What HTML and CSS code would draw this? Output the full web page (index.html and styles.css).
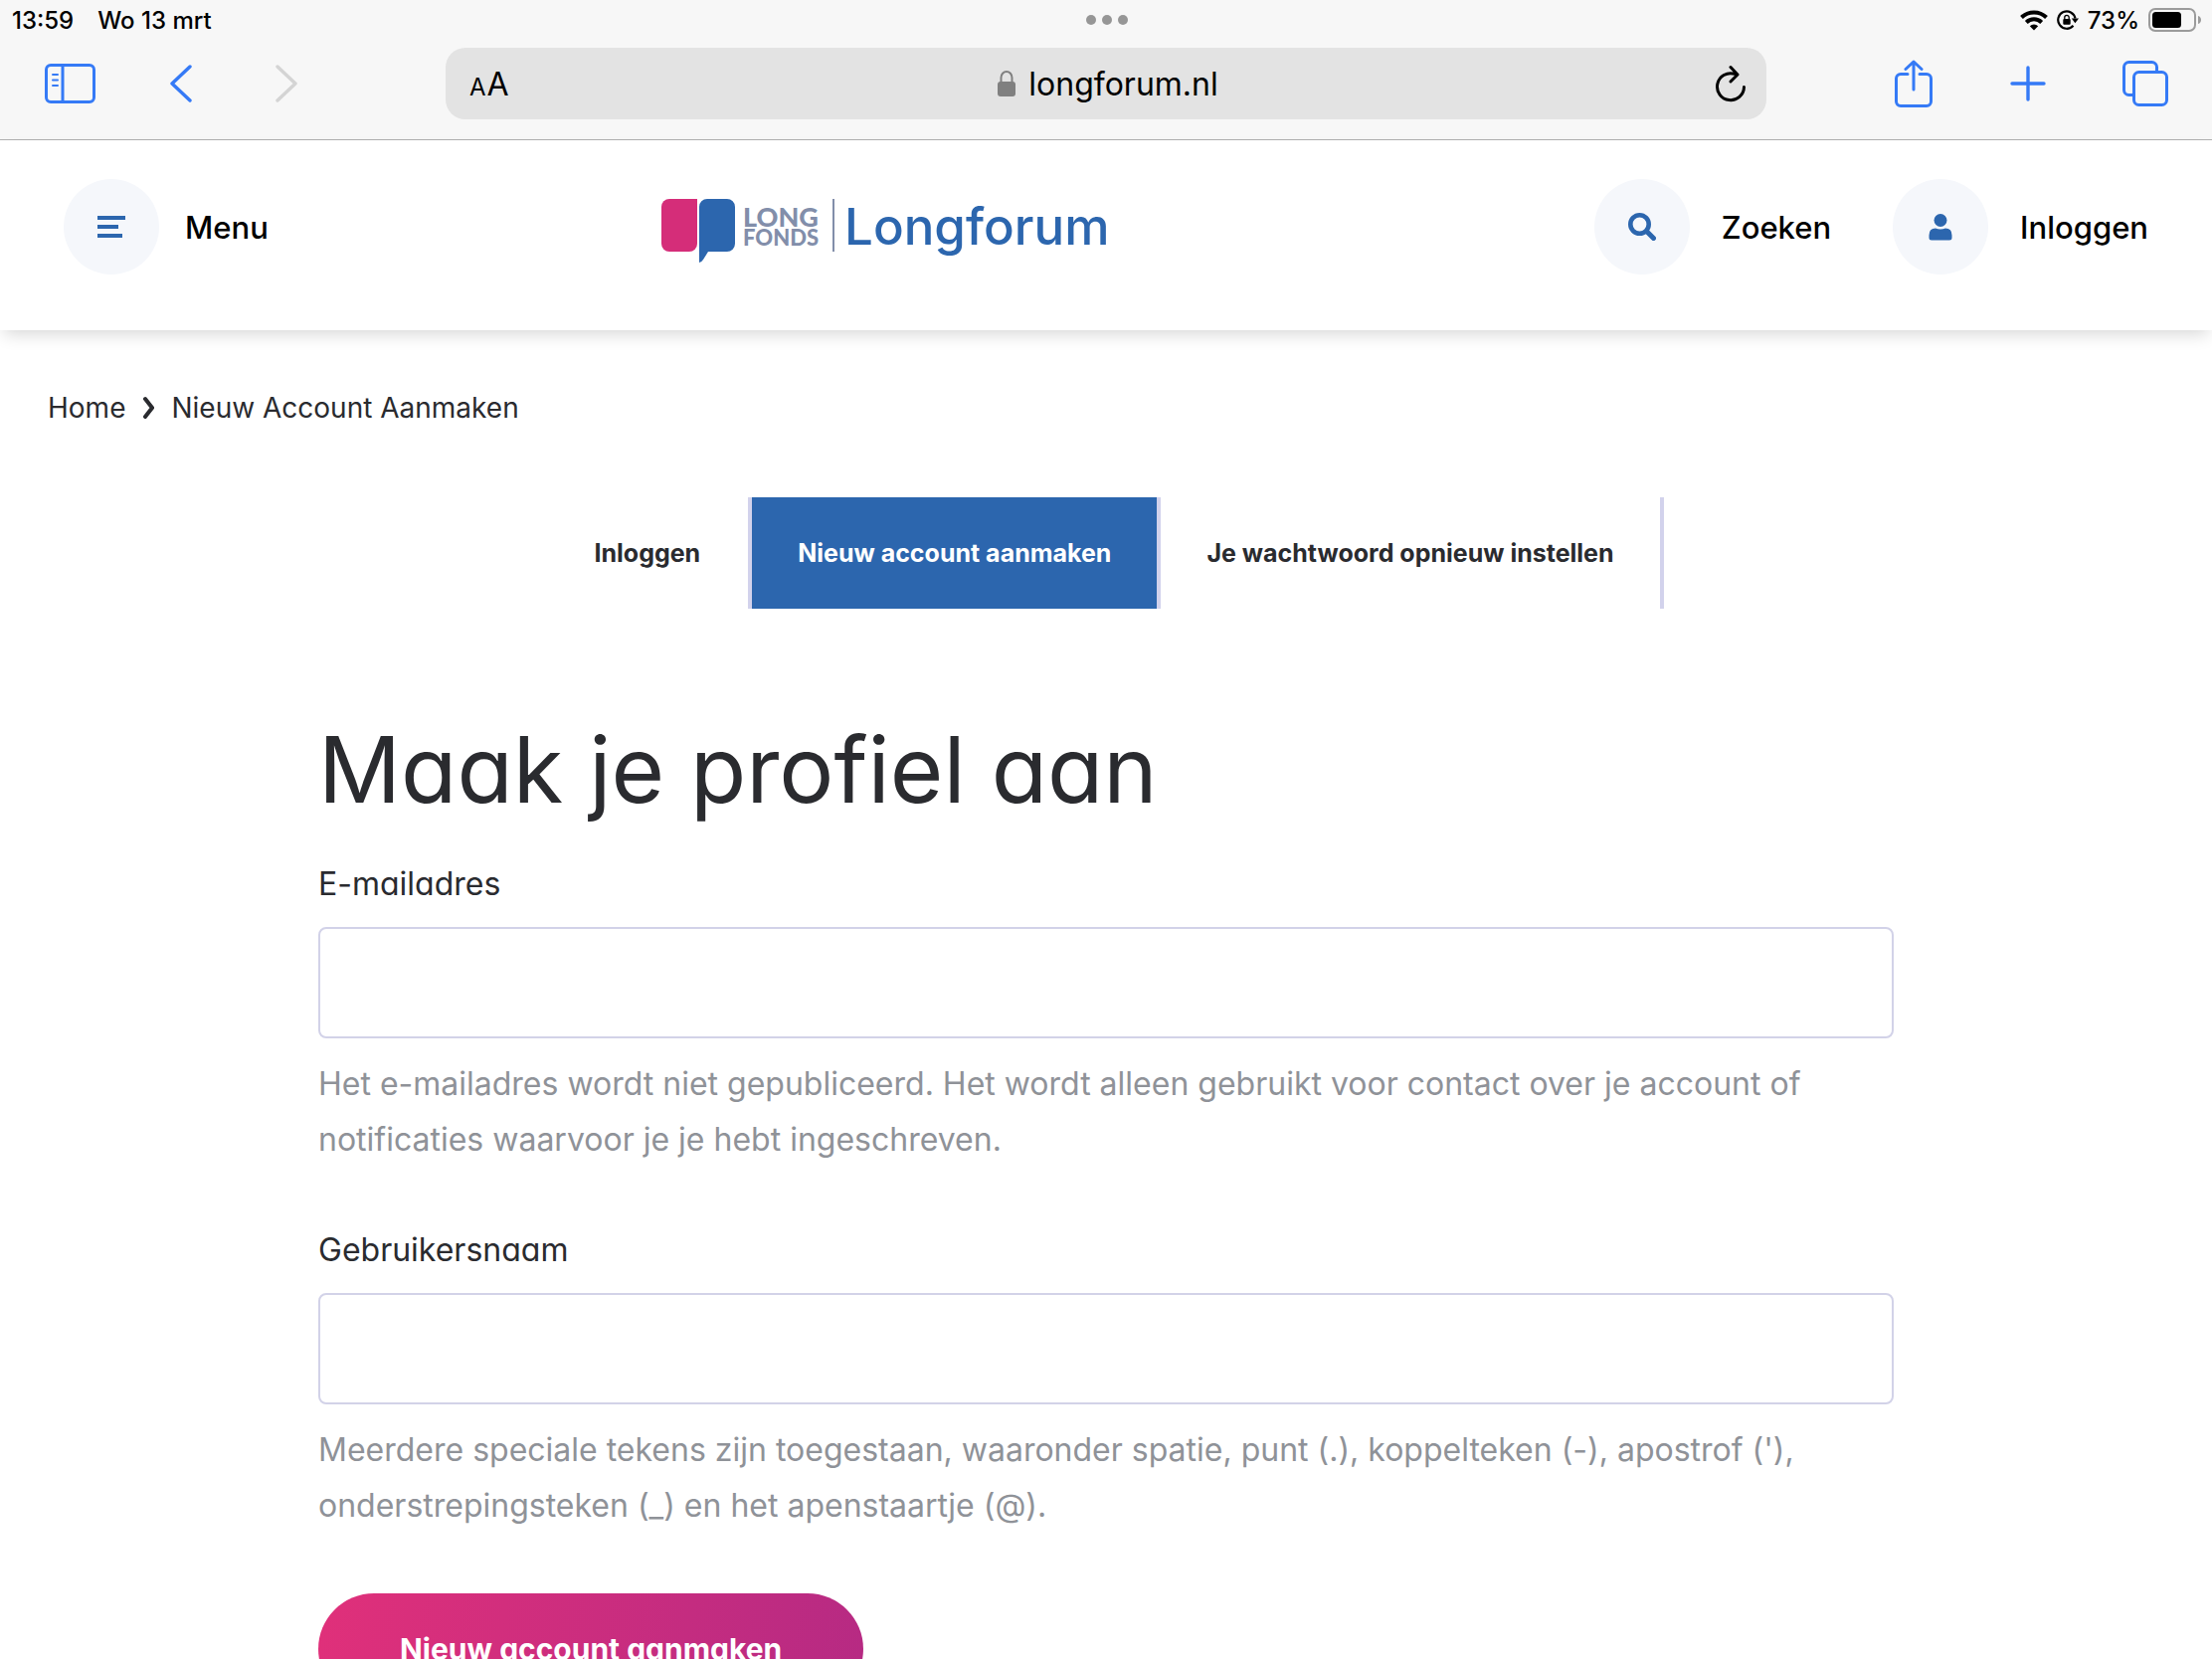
FILE: index.html
```html
<!DOCTYPE html>
<html lang="nl">
<head>
<meta charset="utf-8">
<meta name="viewport" content="width=device-width, initial-scale=1">
<title>Nieuw account aanmaken | Longforum</title>
<link rel="stylesheet" href="styles.css">
</head>
<body>
<div class="browser">
  <div class="status">
    <div class="status-left"><span>13:59</span><span>Wo 13 mrt</span></div>
    <svg class="dots" viewBox="0 0 42 10" width="42" height="10" aria-hidden="true"><circle cx="5" cy="5" r="5"/><circle cx="21" cy="5" r="5"/><circle cx="37" cy="5" r="5"/></svg>
    <div class="status-right">
      <svg viewBox="0 0 28 21" width="28" height="21" aria-hidden="true"><g fill="none" stroke="#000" stroke-width="4"><path d="M1.500 7.500a18 18 0 0 1 25 0"/><path d="M6.300 12.500a11 11 0 0 1 15.400 0"/></g><path d="M14 20.500l-4.200-4.300a6 6 0 0 1 8.400 0z"/></svg>
      <svg viewBox="0 0 22 20" width="22" height="20" aria-hidden="true"><path d="M18.500 8.500A8.700 8.700 0 1 0 16.500 15.800" fill="none" stroke="#000" stroke-width="2.200"/><path d="M14.800 8.500H22L18.400 13.200z"/><rect x="6.300" y="9" width="7.400" height="5.800" rx="1"/><path d="M7.800 9.500V7.500a2.200 2.200 0 0 1 4.400 0v2" fill="none" stroke="#000" stroke-width="1.300"/></svg>
      <span class="percent">73%</span>
      <svg viewBox="0 0 54 24" width="54" height="24" aria-hidden="true"><rect x="1" y="1" width="46" height="22" rx="6" fill="none" stroke="#9b9b9b" stroke-width="2"/><rect x="4" y="4" width="29" height="16" rx="3.500"/><path d="M50 8c4 1 4 7 0 8z" fill="#9b9b9b"/></svg>
    </div>
  </div>
  <div class="toolbar">
    <div class="tools-left">
      <button class="tool" aria-label="Zijbalk"><svg viewBox="0 0 52 40" width="52" height="40"><g fill="none" stroke="currentColor" stroke-width="3" stroke-linecap="round"><rect x="1.500" y="1.500" width="48" height="37" rx="4.500"/><path d="M18 2v36"/><path stroke-width="2" d="M8 11h5M8 16.500h5M8 22h5"/></g></svg></button>
      <button class="tool back" aria-label="Vorige"><svg viewBox="0 0 22 38" width="22" height="38"><path d="M20 2L2 19l18 17" fill="none" stroke="currentColor" stroke-width="3.400" stroke-linecap="round" stroke-linejoin="round"/></svg></button>
      <button class="tool forward" aria-label="Volgende" disabled><svg viewBox="0 0 22 38" width="22" height="38"><path d="M2 2l18 17L2 36" fill="none" stroke="currentColor" stroke-width="3.400" stroke-linecap="round" stroke-linejoin="round"/></svg></button>
    </div>
    <div class="address">
      <button class="reader" aria-label="Weergave"><span class="small-a">A</span><span class="big-a">A</span></button>
      <div class="domain"><svg viewBox="0 0 18 26" width="18" height="26" aria-hidden="true"><rect x="0" y="11" width="18" height="15" rx="3" fill="#808080"/><path d="M3.500 12V7a5.500 6 0 0 1 11 0v5" fill="none" stroke="#808080" stroke-width="2"/></svg><span>longforum.nl</span></div>
      <button class="reload" aria-label="Herladen"><svg viewBox="0 0 32 38" width="32" height="38"><path d="M29.500 22.500A13.500 13.500 0 1 1 20 9.300M16 2.500l7 7.500-7 7" fill="none" stroke="#000" stroke-width="3" stroke-linecap="round" stroke-linejoin="round"/></svg></button>
    </div>
    <div class="tools-right">
      <button class="tool" aria-label="Deel"><svg viewBox="0 0 40 48" width="40" height="48"><path d="M14 14.500H7a4.500 4.500 0 0 0-4.500 4.500v23A4.500 4.500 0 0 0 7 46.500h26a4.500 4.500 0 0 0 4.500-4.500V19a4.500 4.500 0 0 0-4.500-4.500h-7M20 30V2M12 9.500L20 2l8 7.500" fill="none" stroke="currentColor" stroke-width="3" stroke-linecap="round" stroke-linejoin="round"/></svg></button>
      <button class="tool" aria-label="Nieuw tabblad"><svg viewBox="0 0 36 36" width="36" height="36"><path d="M18 2v32M2 18h32" fill="none" stroke="currentColor" stroke-width="3.400" stroke-linecap="round"/></svg></button>
      <button class="tool" aria-label="Tabbladen"><svg viewBox="0 0 46 46" width="46" height="46"><g fill="none" stroke="currentColor" stroke-width="3"><rect x="11.500" y="11.500" width="33" height="33" rx="5"/><path d="M11 34.500H6.500a5 5 0 0 1-5-5v-23a5 5 0 0 1 5-5h23a5 5 0 0 1 5 5V11"/></g></svg></button>
    </div>
  </div>
</div>

<header class="header">
  <div class="header-menu">
    <button class="action menu"><span class="disc"><svg viewBox="0 0 28 24" width="28" height="24" aria-hidden="true"><path d="M0 1h28v4H0zM0 10h21v4H0zM0 19h25v4H0z"/></svg></span><span>Menu</span></button>
  </div>
  <a class="logo" href="#">
    <svg viewBox="0 0 74 64" width="74" height="64" aria-hidden="true"><path d="M8 0h28v45a8 8 0 0 1-8 8H8a8 8 0 0 1-8-8V8a8 8 0 0 1 8-8z" fill="#d52d79"/><path d="M46 0h20a8 8 0 0 1 8 8v37a8 8 0 0 1-8 8H47l-5 8q-2 3-4 3V8a8 8 0 0 1 8-8z" fill="#2c66ae"/></svg>
    <span class="fund"><span class="fund-long">LONG</span><span class="fund-fonds">FONDS</span></span>
    <span class="forum">Longforum</span>
  </a>
  <nav class="header-actions">
    <button class="action"><span class="disc"><svg viewBox="0 0 28 28" width="28" height="28" aria-hidden="true"><g fill="none" stroke="currentColor"><circle cx="11.500" cy="11.500" r="9.200" stroke-width="4.600"/><path d="M18.500 18.500l7 7" stroke-width="5" stroke-linecap="round"/></g></svg></span><span>Zoeken</span></button>
    <a class="action" href="#"><span class="disc"><svg viewBox="0 0 24 27" width="24" height="27" aria-hidden="true"><circle cx="12" cy="6.500" r="6.500"/><path d="M7 14.500q5 2 10 0 6.500 0 6.500 7V24a2.500 2.500 0 0 1-2.500 2.500H3A2.500 2.500 0 0 1 .5 24v-2.500q0-7 6.500-7z"/></svg></span><span>Inloggen</span></a>
  </nav>
</header>

<main class="page">
  <nav class="crumbs" aria-label="Kruimelpad"><a href="#">Home</a><svg viewBox="0 0 12 24" width="12" height="24" aria-hidden="true"><path d="M3 3l7 9-7 9" fill="none" stroke="currentColor" stroke-width="4" stroke-linecap="round"/></svg><span>Nieuw Account Aanmaken</span></nav>
  <nav class="tabs"><a href="#">Inloggen</a><a class="active" href="#">Nieuw account aanmaken</a><a href="#">Je wachtwoord opnieuw instellen</a></nav>
  <form class="form">
    <h1>Maak je profiel aan</h1>
    <div class="field">
      <label for="mail">E-mailadres</label>
      <input id="mail" type="email" aria-describedby="mail-help">
      <p id="mail-help">Het e-mailadres wordt niet gepubliceerd. Het wordt alleen gebruikt voor contact over je account of notificaties waarvoor je je hebt ingeschreven.</p>
    </div>
    <div class="field">
      <label for="name">Gebruikersnaam</label>
      <input id="name" type="text" aria-describedby="name-help">
      <p id="name-help">Meerdere speciale tekens zijn toegestaan, waaronder spatie, punt (.), koppelteken (-), apostrof ('), onderstrepingsteken (_) en het apenstaartje (@).</p>
    </div>
    <button class="submit" type="submit">Nieuw account aanmaken</button>
  </form>
</main>
</body>
</html>
```

FILE: styles.css
```css
* { box-sizing: border-box; }

body {
  margin: 0;
  height: 100vh;
  display: flex;
  flex-direction: column;
  overflow: hidden;
  background: #fff;
  color: #2a2b2f;
  font-family: Inter, "Liberation Sans", sans-serif;
  font-size: 32px;
}

button {
  margin: 0;
  padding: 0;
  border: 0;
  background: none;
  font: inherit;
  color: inherit;
}

a { color: inherit; text-decoration: none; }
svg { display: block; flex: none; }

/* Browser chrome */
.browser {
  flex: none;
  background: #f7f7f7;
  border-bottom: 1px solid #b0b0b0;
  color: #000;
}

.status {
  height: 40px;
  display: grid;
  grid-template-columns: 1fr auto 1fr;
  align-items: center;
  padding: 0 10px 0 12px;
  font-size: 24px;
  font-weight: 500;
}

.status-left { display: flex; gap: 24px; }
.status-right { display: flex; align-items: center; justify-content: flex-end; gap: 9px; }
.dots { fill: #969696; }

.toolbar {
  display: grid;
  grid-template-columns: 448px 1fr 448px;
  align-items: center;
  padding: 8px 0 20px;
}

.tools-left { display: flex; align-items: center; padding-left: 45px; }
.tools-right { display: flex; align-items: center; justify-content: space-between; padding: 0 44px 0 128px; }
.tool { color: #357af6; }
.tool:disabled { color: #d4d4d4; }
.back { margin-left: 74px; }
.forward { margin-left: 84px; }

.address {
  height: 72px;
  display: grid;
  grid-template-columns: 1fr auto 1fr;
  align-items: center;
  padding: 0 20px 0 24px;
  border-radius: 20px;
  background: #e3e3e3;
}

.reader { display: flex; align-items: baseline; gap: 1px; }
.small-a { font-size: 24px; }
.big-a { font-size: 32px; }
.domain { display: flex; align-items: center; gap: 13px; font-size: 32px; }
.reload { justify-self: end; }

/* Site header */
.header {
  flex: none;
  height: 191px;
  display: flex;
  align-items: flex-start;
  padding: 39px 64px 0;
  background: #fff;
  box-shadow: 0 8px 16px -4px rgba(0, 0, 0, 0.16);
  color: #000;
}

.header-menu { width: 601px; }
.header-actions { display: flex; gap: 62px; margin-left: auto; }

.action {
  display: flex;
  align-items: center;
  gap: 32px;
  font-size: 31px;
  font-weight: 500;
}

.action.menu { gap: 26px; }

.disc {
  width: 96px;
  height: 96px;
  display: grid;
  place-items: center;
  border-radius: 50%;
  background: #f5f7fb;
  color: #2c66ae;
  fill: currentColor;
}

.logo { display: flex; align-items: flex-start; margin-top: 20px; }

.fund {
  height: 53px;
  display: flex;
  flex-direction: column;
  justify-content: center;
  padding: 0 14px 0 8px;
  border-right: 2px solid #828eaa;
  color: #828eaa;
  font-family: Lato, sans-serif;
  font-weight: 900;
}

.fund-long { font-size: 27px; line-height: 24px; }
.fund-fonds { font-size: 22px; line-height: 18px; }

.forum {
  padding-left: 10px;
  color: #2c66ae;
  font-size: 51px;
  font-weight: 500;
  line-height: 56px;
}

/* Page content */
.page { flex: 1; min-height: 0; overflow: hidden; padding: 60px 48px 0; }

.crumbs {
  display: flex;
  align-items: center;
  gap: 17px;
  font-size: 28px;
  line-height: 36px;
}

.tabs {
  display: flex;
  justify-content: center;
  margin-top: 72px;
  font-size: 25px;
  font-weight: 700;
  line-height: 112px;
}

.tabs a { padding: 0 46px; border-right: 4px solid #d2d2ec; }
.tabs a:first-child { padding-right: 48px; }
.tabs .active { background: #2c66ae; background-clip: padding-box; color: #fff; }

.form { max-width: 1584px; margin: 110px auto 0; }

h1 {
  margin: 0 0 40px;
  font-size: 92px;
  font-weight: 400;
  line-height: 104px;
}

.action, .forum, h1, label, .submit { font-feature-settings: "cv11"; }

.field { margin-bottom: 60px; }
label { display: block; font-weight: 400; line-height: 46px; }

input {
  display: block;
  width: 100%;
  height: 112px;
  margin: 20px 0 18px;
  padding: 0 24px;
  border: 2px solid #d2d2e8;
  border-radius: 8px;
  background: #fff;
  font: inherit;
}

.field p { margin: 0; color: #8f9298; line-height: 56px; }

.submit {
  height: 112px;
  padding: 0 82px;
  border-radius: 56px;
  background: linear-gradient(100deg, #e0307a, #b62a83);
  color: #fff;
  font-size: 30px;
  font-weight: 700;
}
```
